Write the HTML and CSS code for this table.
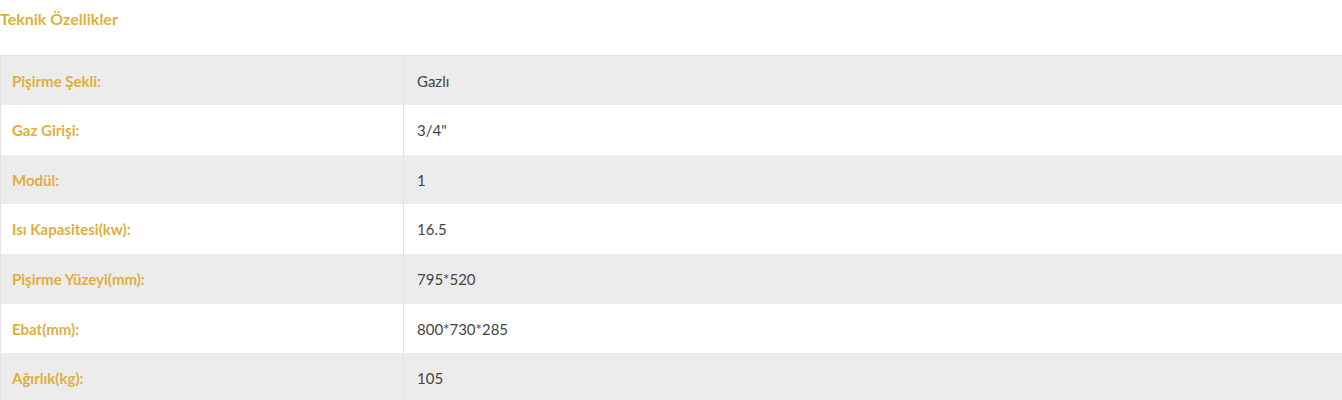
FILE: index.html
```html
<!DOCTYPE html>
<html lang="tr">
<head>
<meta charset="utf-8">
<link rel="stylesheet" href="styles.css">
</head>
<body>
<h3 class="title">Teknik Özellikler</h3>
<table class="specs">
<tbody>
<tr><th>Pişirme Şekli:</th><td>Gazlı</td></tr>
<tr><th>Gaz Girişi:</th><td>3/4"</td></tr>
<tr><th>Modül:</th><td>1</td></tr>
<tr><th>Isı Kapasitesi(kw):</th><td>16.5</td></tr>
<tr><th>Pişirme Yüzeyi(mm):</th><td>795*520</td></tr>
<tr><th>Ebat(mm):</th><td>800*730*285</td></tr>
<tr><th>Ağırlık(kg):</th><td>105</td></tr>
</tbody>
</table>
</body>
</html>
```
FILE: styles.css
```css
html, body {
  margin: 0;
  padding: 0;
  background: #fff;
}
body {
  font-family: Lato, "Open Sans", sans-serif;
  font-size: 15px;
  color: #444;
}
.title {
  margin: 0;
  padding-top: 9px;
  height: 55px;
  box-sizing: border-box;
  font-size: 16px;
  font-weight: 700;
  color: #dfae3c;
}
.specs {
  width: 100%;
  border-collapse: collapse;
  border-top: 1px solid #e2e2e2;
  border-left: 1px solid #e2e2e2;
}
.specs tr {
  height: 49.67px;
}
.specs tr:nth-child(odd) {
  background: #ececec;
}
.specs th {
  width: 380px;
  padding: 0 11px;
  text-align: left;
  font-weight: 700;
  color: #dfae3c;
  border-right: 1px solid #e2e2e2;
}
.specs td {
  padding: 0 12px 0 13px;
  color: #444;
}
```
